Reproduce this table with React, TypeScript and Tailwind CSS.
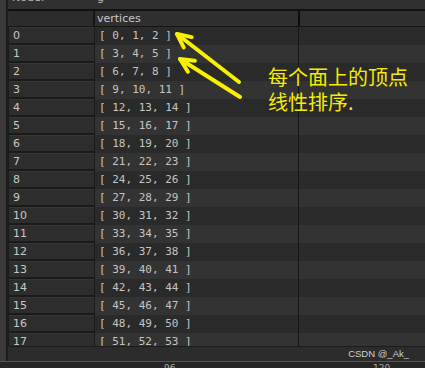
const rows = Array.from({ length: 18 }, (_, i) => [i * 3, i * 3 + 1, i * 3 + 2]);

function Arrow({ x1, y1, x2, y2 }: { x1: number; y1: number; x2: number; y2: number }) {
  const a = Math.atan2(y2 - y1, x2 - x1);
  const len = 15;
  const spread = 0.45;
  const p1 = [x2 - len * Math.cos(a - spread), y2 - len * Math.sin(a - spread)];
  const p2 = [x2 - len * Math.cos(a + spread), y2 - len * Math.sin(a + spread)];
  return (
    <g stroke="#f7f000" strokeWidth={4} strokeLinecap="round" fill="none">
      <line x1={x1} y1={y1} x2={x2} y2={y2} />
      <polyline points={`${p1[0]},${p1[1]} ${x2},${y2} ${p2[0]},${p2[1]}`} strokeLinejoin="round" />
    </g>
  );
}

export default function App() {
  return (
    <div className="relative w-[425px] h-[368px] overflow-hidden bg-[#2b2b2b] flex flex-col text-[#c8c8c8]" style={{ fontFamily: '"DejaVu Sans", sans-serif' }}>
      <div className="flex flex-1 min-h-0">
        <div className="w-[6px] bg-[#3b3b3b]" />
        <div className="w-[2px] bg-[#1d1d1d]" />
        <div className="flex-1 flex flex-col min-w-0">
          <div className="h-[9px] overflow-hidden bg-[#303030] flex text-[11px]">
            <span className="ml-[4px] -mt-[9px] leading-[14px] text-[#bbb] w-[85px]">Node:</span>
            <span className="-mt-[9px] leading-[14px] text-[#bbb]">g</span>
          </div>
          <div className="h-[2px] bg-[#111]" />
          <div className="flex-1 min-h-0 overflow-hidden flex flex-col">
            <div className="flex h-[16px] shrink-0 bg-[#2f2f2f] border-b border-[#151515] text-[11px]">
              <div className="w-[86px] ml-[1px] border-r-2 border-[#151515] bg-[#2c2c2c]" />
              <div className="w-[203px] pl-[2px] leading-[15px] text-[#c8c8c8]">vertices</div>
              <div className="w-[2px] bg-[#0e0e0e]" />
              <div className="flex-1" />
            </div>
            {rows.map((r, i) => (
              <div key={i} className={`flex h-[18px] shrink-0 ${i % 2 === 0 ? 'bg-[#2a2a2a]' : 'bg-[#333333]'}`}>
                <div className="w-[87px] bg-[#1a1a1a] pl-[1px] pr-[1px] pb-[2px]">
                  <div className="h-full bg-[#2d2d2d] border-t border-[#363636] pl-[4px] text-[11px] leading-[16px] text-[#c8c8c8]">{i}</div>
                </div>
                <div className="w-[203px] pl-[4px] text-[11px] leading-[18px] text-[#c4c4c4]" style={{ fontFamily: '"DejaVu Sans Mono", monospace' }}>
                  [ {r[0]}, {r[1]}, {r[2]} ]
                </div>
                <div className="w-[1px] bg-[#151515]" />
                <div className="flex-1" />
              </div>
            ))}
          </div>
          <div className="h-[15px] shrink-0 border-t border-[#1c1c1c] bg-[#2c2c2c] flex items-center justify-end pr-[16px]">
            <span className="text-[9.5px] text-[#cfcfcf]" style={{ fontFamily: '"Liberation Sans", Arial, sans-serif' }}>CSDN @_Ak_</span>
          </div>
        </div>
      </div>
      <div className="h-[1px] bg-[#555]" />
      <div className="h-[6px] bg-[#262626] overflow-hidden relative text-[9px] text-[#aaa]">
        <span className="absolute left-[164px] top-[1px] leading-[10px]">96</span>
        <span className="absolute left-[373px] top-[1px] leading-[10px]">120</span>
      </div>

      <svg className="absolute left-0 top-0" width={425} height={368}>
        <Arrow x1={239} y1={82} x2={177} y2={34} />
        <Arrow x1={240} y1={97} x2={180} y2={59} />
      </svg>
      <div
        className="absolute left-[268px] top-[64px] text-[20px] leading-[25px] text-[#f5ec00]"
        style={{ fontFamily: '"Noto Sans CJK SC", sans-serif' }}
      >
        每个面上的顶点
        <br />
        线性排序.
      </div>
    </div>
  );
}
